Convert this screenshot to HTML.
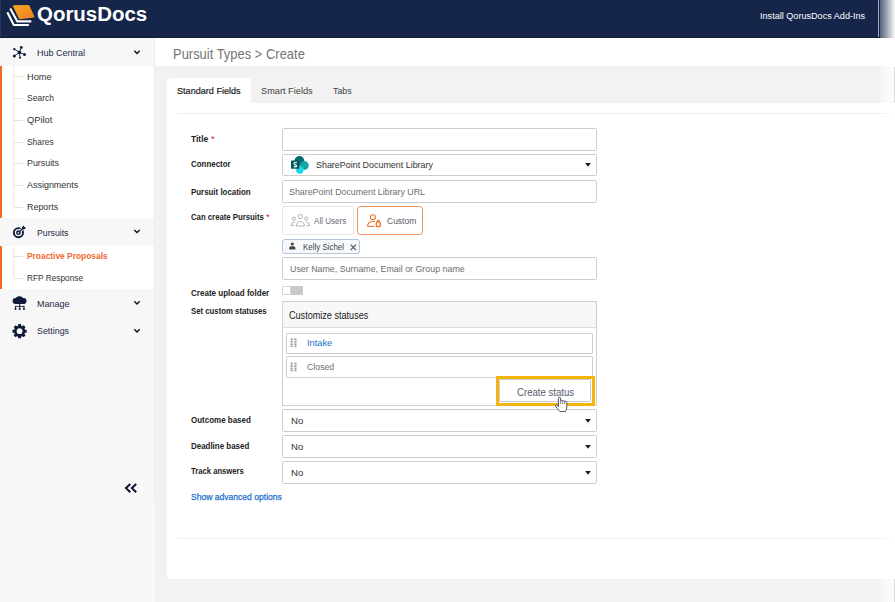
<!DOCTYPE html>
<html><head><meta charset="utf-8">
<style>
*{box-sizing:border-box;margin:0;padding:0}
html,body{width:895px;height:602px;overflow:hidden;background:#f2f2f2;font-family:"Liberation Sans",sans-serif}
.a{position:absolute}
.t{position:absolute;white-space:nowrap;line-height:1;transform-origin:left top;display:block}
.inp{position:absolute;left:282px;width:315px;border:1px solid #cdcdcd;background:#fff;border-radius:1.5px}
.caret{position:absolute;left:585.3px;width:0;height:0;border-left:2.9px solid transparent;border-right:2.9px solid transparent;border-top:3.6px solid #1a1a1a}
.tick{position:absolute;left:14px;width:8.5px;height:1px;background:#e3e3e3}
</style></head><body>
<!-- header -->
<div class="a" style="left:0;top:0;width:895px;height:38px;background:#15264a"></div>
<div class="a" style="left:0;top:37px;width:895px;height:1px;background:#0f1c3a"></div>
<div class="a" style="left:0;top:0;width:1px;height:37px;background:#24345a"></div>
<svg class="a" style="left:0;top:0" width="40" height="38" viewBox="0 0 40 38">
<defs><linearGradient id="g" x1="0" y1="0" x2="1" y2="1"><stop offset="0" stop-color="#f9a825"/><stop offset="1" stop-color="#ef7d1e"/></linearGradient></defs>
<path d="M7.3 12.3 L13.8 25 L28.8 25" fill="none" stroke="#fff" stroke-width="2.1" stroke-linejoin="miter"/>
<path d="M10.3 8.6 L17.3 21.4 L31.3 21.4" fill="none" stroke="#fff" stroke-width="2.1" stroke-linejoin="miter"/>
<path d="M13.6 5.3 L28.4 5 Q29.2 5 29.5 5.7 L34.4 16.4 Q34.8 17.4 33.8 17.5 L20 19.2 Q19.2 19.3 18.8 18.5 L13 6.3 Q12.7 5.4 13.6 5.3 Z" fill="url(#g)"/>
</svg>
<!-- sidebar -->
<div class="a" style="left:0;top:38px;width:154.4px;height:564px;background:#f7f7f7"></div>
<div class="a" style="left:154.4px;top:38px;width:1px;height:564px;background:#ececec"></div>
<div class="a" style="left:0;top:66px;width:154.4px;height:151.8px;background:#fff"></div>
<div class="a" style="left:0;top:66px;width:2.4px;height:151.8px;background:#f26a1b"></div>
<div class="a" style="left:0;top:245.6px;width:154.4px;height:43.6px;background:#fff"></div>
<div class="a" style="left:0;top:245.6px;width:2.4px;height:43.6px;background:#f26a1b"></div>
<div class="a" style="left:13.2px;top:66px;width:1px;height:141px;background:#ebebeb"></div>
<div class="a" style="left:13.2px;top:245.6px;width:1px;height:32.5px;background:#ebebeb"></div>
<div class="tick" style="top:76.4px"></div><div class="tick" style="top:98.1px"></div><div class="tick" style="top:119.8px"></div><div class="tick" style="top:141.5px"></div><div class="tick" style="top:163.2px"></div><div class="tick" style="top:184.9px"></div><div class="tick" style="top:206.6px"></div>
<div class="tick" style="top:256px"></div><div class="tick" style="top:277.6px"></div>
<div class="a" style="left:0;top:501.3px;width:155.3px;height:101px;background:#f8f8f8"></div>
<!-- sidebar icons -->
<svg class="a" style="left:0;top:38px" width="160" height="320" viewBox="0 38 160 320">
<g stroke="#0f1a3a" stroke-width="0.9" fill="#0f1a3a">
<line x1="19.45" y1="52.4" x2="21.3" y2="47.4"/><line x1="19.45" y1="52.4" x2="14.3" y2="49.2"/><line x1="19.45" y1="52.4" x2="24.5" y2="54.5"/><line x1="19.45" y1="52.4" x2="14.3" y2="56"/><line x1="19.45" y1="52.4" x2="20" y2="57.8"/>
<circle cx="19.45" cy="52.4" r="1.8" stroke="none"/><circle cx="21.3" cy="47.4" r="1.4" stroke="none"/><circle cx="14.3" cy="49.2" r="1.15" stroke="none"/><circle cx="24.5" cy="54.5" r="1.5" stroke="none"/><circle cx="14.3" cy="56" r="1.5" stroke="none"/><circle cx="20" cy="57.8" r="1.05" stroke="none"/>
</g>
<!-- target icon -->
<g fill="none" stroke="#0f1a3a">
<circle cx="18.45" cy="232.7" r="4.55" stroke-width="1.9"/>
<circle cx="18.45" cy="232.7" r="1.65" stroke-width="1.5"/>
<line x1="20.3" y1="230.9" x2="23.6" y2="227.7" stroke="#f7f7f7" stroke-width="2.8"/>
<line x1="18.7" y1="232.4" x2="23.2" y2="228.2" stroke-width="1.2"/>
<path d="M21.7 229.6 L22.1 226.9 L23.9 225.4 L24.3 227 L26 227.4 L24.6 229.2 Z" fill="#0f1a3a" stroke="none"/>
</g>
<!-- cloud icon -->
<g fill="#0f1a3a" stroke="none">
<circle cx="15.6" cy="300.9" r="3"/><circle cx="19.4" cy="300.1" r="3.95"/><circle cx="23.6" cy="301" r="2.9"/><rect x="15.6" y="300.5" width="8" height="3.4"/>
<rect x="19.2" y="303.5" width="1" height="3"/>
<rect x="15.1" y="305.9" width="9.3" height="0.9"/>
<rect x="15.1" y="305.9" width="0.9" height="2.4"/><rect x="23.5" y="305.9" width="0.9" height="2.4"/><rect x="19.2" y="305.9" width="1" height="2.4"/>
<circle cx="15.55" cy="309" r="1.05"/><circle cx="19.7" cy="309" r="1.05"/><circle cx="23.95" cy="309" r="1.05"/>
</g>
<!-- gear -->
<g transform="translate(19.6 331.2)" fill="#0f1a3a">
<path fill-rule="evenodd" d="M0 -5.6 A5.6 5.6 0 1 1 0 5.6 A5.6 5.6 0 1 1 0 -5.6 Z M0 -2.9 A2.9 2.9 0 1 0 0 2.9 A2.9 2.9 0 1 0 0 -2.9 Z"/>
<g id="tt"><rect x="-1.5" y="-7.1" width="3" height="2.6" rx="0.5"/></g>
<use href="#tt" transform="rotate(45)"/><use href="#tt" transform="rotate(90)"/><use href="#tt" transform="rotate(135)"/><use href="#tt" transform="rotate(180)"/><use href="#tt" transform="rotate(225)"/><use href="#tt" transform="rotate(270)"/><use href="#tt" transform="rotate(315)"/>
</g>
<!-- chevrons -->
<g fill="none" stroke="#111" stroke-width="1.4">
<path d="M134.3 50.7 L137 53.4 L139.7 50.7"/><path d="M134.3 229.9 L137 232.6 L139.7 229.9"/><path d="M134.3 301.3 L137 304 L139.7 301.3"/><path d="M134.3 329.3 L137 332 L139.7 329.3"/>
</g>
</svg>
<svg class="a" style="left:120px;top:478px" width="24" height="20" viewBox="120 478 24 20">
<g fill="none" stroke="#0b1230" stroke-width="2"><path d="M130.3 484 L126 488.1 L130.3 492.3"/><path d="M136.2 484 L131.9 488.1 L136.2 492.3"/></g>
</svg>
<!-- title bar -->
<div class="a" style="left:155px;top:38px;width:740px;height:28px;background:#fff"></div>
<div class="a" style="left:155px;top:66px;width:740px;height:1px;background:#f4f4f4"></div><div class="a" style="left:155px;top:67px;width:740px;height:1px;background:#eeeeee"></div>
<!-- tab + panel -->
<div class="a" style="left:167px;top:78px;width:83.5px;height:26px;background:#fff;border-radius:3px 3px 0 0"></div>
<div class="a" style="left:167px;top:103px;width:728px;height:476px;background:#fff;border-radius:0 0 0 3px"></div>
<div class="a" style="left:177px;top:113px;width:718px;height:1.2px;background:#ededed"></div>
<div class="a" style="left:177px;top:538.2px;width:718px;height:1.3px;background:#eff0f2"></div>
<!-- inputs -->
<div class="inp" style="top:128px;height:23px"></div>
<div class="inp" style="top:154px;height:22px"></div><svg class="a" style="left:583px;top:161.3px" width="10" height="8" viewBox="0 0 10 8"><path d="M2.2 2 H7.9 L5.05 5.7 Z" fill="#1a1a1a"/></svg>
<div class="inp" style="top:179.5px;height:23px"></div>
<div class="inp" style="top:257px;height:23px"></div>
<div class="inp" style="top:409px;height:23px"></div><svg class="a" style="left:583px;top:416.8px" width="10" height="8" viewBox="0 0 10 8"><path d="M2.2 2 H7.9 L5.05 5.7 Z" fill="#1a1a1a"/></svg>
<div class="inp" style="top:435.3px;height:22.6px"></div><svg class="a" style="left:583px;top:442.8px" width="10" height="8" viewBox="0 0 10 8"><path d="M2.2 2 H7.9 L5.05 5.7 Z" fill="#1a1a1a"/></svg>
<div class="inp" style="top:461.3px;height:22.4px"></div><svg class="a" style="left:583px;top:468.8px" width="10" height="8" viewBox="0 0 10 8"><path d="M2.2 2 H7.9 L5.05 5.7 Z" fill="#1a1a1a"/></svg>
<!-- sharepoint icon -->
<svg class="a" style="left:288px;top:154px" width="24" height="22" viewBox="288 154 24 22">
<circle cx="299.4" cy="160.9" r="4.9" fill="#036c70"/>
<circle cx="304.4" cy="165.5" r="4.4" fill="#15a5ad"/>
<circle cx="299.8" cy="170" r="3.7" fill="#1ad6e4"/>
<rect x="291" y="160.6" width="8.3" height="8.2" rx="0.6" fill="#04595d"/>
<path d="M296.9 162.8 Q294.2 161.9 294 163.6 Q294 164.6 295.3 164.9 Q296.7 165.3 296.5 166.3 Q296.1 167.4 293.7 166.5" fill="none" stroke="#fff" stroke-width="1.1"/>
</svg>
<!-- all users / custom buttons -->
<div class="a" style="left:282px;top:206px;width:71.6px;height:28.8px;border:1px solid #e6e6e6;border-radius:3px;background:#fff"></div>
<div class="a" style="left:357px;top:206px;width:66px;height:29.4px;border:1.2px solid #f0915a;border-radius:3.5px;background:#fff"></div>
<svg class="a" style="left:288px;top:210px" width="100" height="22" viewBox="288 210 100 22">
<g fill="none" stroke="#aeaeae" stroke-width="0.95">
<circle cx="300.3" cy="216.6" r="2.2"/><path d="M296.4 226 Q296.4 221.6 300.4 221.6 Q304.4 221.6 304.4 226 Z"/>
<circle cx="293.9" cy="218.6" r="1.6"/><path d="M294.8 222.2 Q291.4 221.8 291.3 225.6 L294.4 225.6"/>
<circle cx="306.2" cy="218.6" r="1.6"/><path d="M306 222.2 Q309.4 221.8 309.5 225.6 L306.4 225.6"/>
</g>
<g fill="none" stroke="#f0702a" stroke-width="1.05">
<circle cx="372.9" cy="217.3" r="2.5"/>
<path d="M367.6 226.4 Q367.5 221.6 372.6 221.4 L374.8 221.4"/><path d="M367.6 226.4 L374.6 226.4"/>
<rect x="376.3" y="222.2" width="3.9" height="4.3" rx="0.7" stroke-width="1.3"/><path d="M377.2 222.2 V221 A1.1 1.1 0 0 1 379.4 221 V222.2"/>
</g>
</svg>
<!-- chip -->
<div class="a" style="left:281.6px;top:238.6px;width:78.4px;height:15.2px;border:1px solid #b4c5da;border-radius:3px;background:#f6f9fc"></div>
<svg class="a" style="left:286px;top:240px" width="74" height="13" viewBox="286 240 74 13">
<circle cx="292.3" cy="244" r="1.6" fill="#444"/><path d="M289.2 249.4 V248 Q289.2 246.2 291 246.2 H293.6 Q295.4 246.2 295.4 248 V249.4 Z" fill="#444"/>
<path d="M350.6 244.6 L356 250.2 M356 244.6 L350.6 250.2" stroke="#555" stroke-width="1.2" fill="none"/>
</svg>
<!-- toggle -->
<div class="a" style="left:282px;top:285.8px;width:20.6px;height:9.4px;background:#c9c9c9;border-radius:1px"></div>
<div class="a" style="left:282px;top:285.8px;width:9.4px;height:9.4px;background:#fff;border:1px solid #d5d5d5;border-radius:1px"></div>
<!-- status box -->
<div class="a" style="left:281.6px;top:300.8px;width:315.6px;height:105px;border:1px solid #cfcfcf;background:#fff"></div>
<div class="a" style="left:282.6px;top:301.8px;width:313.6px;height:26px;background:#f7f7f7;border-bottom:1px solid #dcdcdc"></div>
<div class="a" style="left:286px;top:333px;width:307px;height:21px;border:1px solid #cfcfcf;border-radius:1px;background:#fff"></div>
<div class="a" style="left:286px;top:356px;width:307px;height:22px;border:1px solid #cfcfcf;border-radius:1px;background:#fff"></div>
<svg class="a" style="left:289px;top:336px" width="10" height="38" viewBox="289 336 10 38">
<g fill="#9a9a9a"><rect x="290.6" y="338.4" width="2.1" height="1.8"/><rect x="294.4" y="338.4" width="2.1" height="1.8"/><rect x="290.6" y="340.9" width="2.1" height="1.8"/><rect x="294.4" y="340.9" width="2.1" height="1.8"/><rect x="290.6" y="343.4" width="2.1" height="1.8"/><rect x="294.4" y="343.4" width="2.1" height="1.8"/><rect x="290.6" y="345.6" width="2.1" height="1.5"/><rect x="294.4" y="345.6" width="2.1" height="1.5"/>
<rect x="290.6" y="362.6" width="2.1" height="1.8"/><rect x="294.4" y="362.6" width="2.1" height="1.8"/><rect x="290.6" y="365.1" width="2.1" height="1.8"/><rect x="294.4" y="365.1" width="2.1" height="1.8"/><rect x="290.6" y="367.6" width="2.1" height="1.8"/><rect x="294.4" y="367.6" width="2.1" height="1.8"/><rect x="290.6" y="369.8" width="2.1" height="1.5"/><rect x="294.4" y="369.8" width="2.1" height="1.5"/></g>
</svg>
<!-- create status button + highlight -->
<div class="a" style="left:499.4px;top:379.4px;width:92px;height:22.4px;border:1px solid #c9cbd6;background:#fff;border-radius:1px"></div>
<div class="a" style="left:495.6px;top:375.6px;width:99.6px;height:30.2px;border:3.4px solid #f5b50f"></div>
<span class="t" style="left:37.17px;top:4.79px;font-size:19.5px;color:#fff;transform:scaleX(1.0488);font-weight:bold">QorusDocs</span>
<span class="t" style="left:760.35px;top:11.27px;font-size:9.6px;color:#fff;transform:scaleX(0.9480)">Install QorusDocs Add-Ins</span>
<span class="t" style="left:37.46px;top:48.27px;font-size:9.6px;color:#1b2a4a;transform:scaleX(0.9385)">Hub Central</span>
<span class="t" style="left:26.84px;top:71.64px;font-size:9.4px;color:#333;transform:scaleX(0.9845)">Home</span>
<span class="t" style="left:26.89px;top:93.44px;font-size:9.4px;color:#333;transform:scaleX(0.9095)">Search</span>
<span class="t" style="left:26.84px;top:115.24px;font-size:9.4px;color:#333;transform:scaleX(0.9881)">QPilot</span>
<span class="t" style="left:26.89px;top:136.84px;font-size:9.4px;color:#333;transform:scaleX(0.8960)">Shares</span>
<span class="t" style="left:26.87px;top:158.44px;font-size:9.4px;color:#333;transform:scaleX(0.9455)">Pursuits</span>
<span class="t" style="left:26.86px;top:180.04px;font-size:9.4px;color:#333;transform:scaleX(0.9545)">Assignments</span>
<span class="t" style="left:26.86px;top:202.04px;font-size:9.4px;color:#333;transform:scaleX(0.9513)">Reports</span>
<span class="t" style="left:37.48px;top:227.87px;font-size:9.6px;color:#1b2a4a;transform:scaleX(0.9075)">Pursuits</span>
<span class="t" style="left:26.90px;top:251.46px;font-size:9.5px;color:#ee6b2d;transform:scaleX(0.8827);font-weight:bold">Proactive Proposals</span>
<span class="t" style="left:26.90px;top:272.84px;font-size:9.4px;color:#333;transform:scaleX(0.8836)">RFP Response</span>
<span class="t" style="left:37.46px;top:298.87px;font-size:9.6px;color:#1b2a4a;transform:scaleX(0.9417)">Manage</span>
<span class="t" style="left:37.47px;top:326.47px;font-size:9.6px;color:#1b2a4a;transform:scaleX(0.9244)">Settings</span>
<span class="t" style="left:172.82px;top:47.01px;font-size:14.4px;color:#757575;transform:scaleX(0.8998)">Pursuit Types &gt; Create</span>
<span class="t" style="left:176.85px;top:85.70px;font-size:9.8px;color:#222;transform:scaleX(0.9279);-webkit-text-stroke:0.2px #222">Standard Fields</span>
<span class="t" style="left:260.85px;top:85.70px;font-size:9.8px;color:#444;transform:scaleX(0.9398)">Smart Fields</span>
<span class="t" style="left:332.87px;top:85.70px;font-size:9.8px;color:#444;transform:scaleX(0.9021)">Tabs</span>
<span class="t" style="left:191.29px;top:134.46px;font-size:9.5px;color:#222;transform:scaleX(0.8905);font-weight:bold">Title</span>
<span class="t" style="left:210.84px;top:133.96px;font-size:9.5px;color:#d9261c;transform:scaleX(0.9830)">*</span>
<span class="t" style="left:191.32px;top:159.46px;font-size:9.5px;color:#222;transform:scaleX(0.8345);font-weight:bold">Connector</span>
<span class="t" style="left:191.33px;top:187.46px;font-size:9.5px;color:#222;transform:scaleX(0.8307);font-weight:bold">Pursuit location</span>
<span class="t" style="left:191.33px;top:212.46px;font-size:9.5px;color:#222;transform:scaleX(0.8163);font-weight:bold">Can create Pursuits</span>
<span class="t" style="left:266.44px;top:211.96px;font-size:9.5px;color:#d9261c;transform:scaleX(0.9830)">*</span>
<span class="t" style="left:191.32px;top:288.46px;font-size:9.5px;color:#222;transform:scaleX(0.8470);font-weight:bold">Create upload folder</span>
<span class="t" style="left:191.33px;top:306.36px;font-size:9.5px;color:#222;transform:scaleX(0.8186);font-weight:bold">Set custom statuses</span>
<span class="t" style="left:191.32px;top:415.06px;font-size:9.5px;color:#222;transform:scaleX(0.8395);font-weight:bold">Outcome based</span>
<span class="t" style="left:191.32px;top:441.06px;font-size:9.5px;color:#222;transform:scaleX(0.8355);font-weight:bold">Deadline based</span>
<span class="t" style="left:191.34px;top:466.46px;font-size:9.5px;color:#222;transform:scaleX(0.8067);font-weight:bold">Track answers</span>
<span class="t" style="left:191.29px;top:492.44px;font-size:9.4px;color:#1a6fd0;transform:scaleX(0.9123);-webkit-text-stroke:0.25px #1a6fd0">Show advanced options</span>
<span class="t" style="left:315.86px;top:160.30px;font-size:9.8px;color:#333;transform:scaleX(0.9102)">SharePoint Document Library</span>
<span class="t" style="left:289.47px;top:186.70px;font-size:9.8px;color:#6e6e6e;transform:scaleX(0.9014)">SharePoint Document Library URL</span>
<span class="t" style="left:314.32px;top:216.27px;font-size:9.6px;color:#6c6c78;transform:scaleX(0.8401)">All Users</span>
<span class="t" style="left:386.89px;top:216.27px;font-size:9.6px;color:#5a5a66;transform:scaleX(0.8847)">Custom</span>
<span class="t" style="left:302.52px;top:242.44px;font-size:9.4px;color:#444;transform:scaleX(0.8465)">Kelly Sichel</span>
<span class="t" style="left:289.87px;top:264.30px;font-size:9.8px;color:#6e6e6e;transform:scaleX(0.9037)">User Name, Surname, Email or Group name</span>
<span class="t" style="left:289.45px;top:310.94px;font-size:10px;color:#222;transform:scaleX(0.9087)">Customize statuses</span>
<span class="t" style="left:307.24px;top:338.27px;font-size:9.6px;color:#1a73c8;transform:scaleX(0.9660)">Intake</span>
<span class="t" style="left:307.27px;top:362.47px;font-size:9.6px;color:#707070;transform:scaleX(0.9122)">Closed</span>
<span class="t" style="left:517.42px;top:387.54px;font-size:10px;color:#5a5a6e;transform:scaleX(0.9599)">Create status</span>
<span class="t" style="left:291.22px;top:416.10px;font-size:9.8px;color:#333;transform:scaleX(0.9796)">No</span>
<span class="t" style="left:291.22px;top:442.10px;font-size:9.8px;color:#333;transform:scaleX(0.9796)">No</span>
<span class="t" style="left:291.22px;top:468.10px;font-size:9.8px;color:#333;transform:scaleX(0.9796)">No</span>
<!-- hand cursor -->
<svg class="a" style="left:553px;top:395px" width="18" height="20" viewBox="553 395 18 20">
<path d="M558.4 398.3 Q558.4 397.3 559.5 397.3 Q560.6 397.3 560.6 398.3 V400.6 Q561.6 400 562.5 400.8 Q563.6 400.3 564.5 401.2 Q566.4 400.9 566.8 402.6 V407 Q566.8 409.6 565.4 411.6 H560 Q557.4 408.6 555.6 406.4 Q555 405 556.4 404.8 L558.4 406.4 Z" fill="#fff" stroke="#2e3348" stroke-width="0.85" stroke-linejoin="round"/>
<path d="M560.6 400.6 V404 M562.6 401 V404 M564.6 401.4 V404.2" stroke="#2e3348" stroke-width="0.6" fill="none"/>
</svg>
<!-- right edge fade -->
<div class="a" style="left:878.2px;top:0;width:1.3px;height:37.4px;background:#a6adbd"></div>
<div class="a" style="left:879.5px;top:0;width:15.5px;height:602px;background:linear-gradient(to right,rgba(255,255,255,0.28),rgba(255,255,255,0.97))"></div>
<div class="a" style="left:894px;top:67px;width:1px;height:36px;background:#dadada"></div>
<div class="a" style="left:894px;top:579px;width:1px;height:23px;background:#dadada"></div>
</body></html>
